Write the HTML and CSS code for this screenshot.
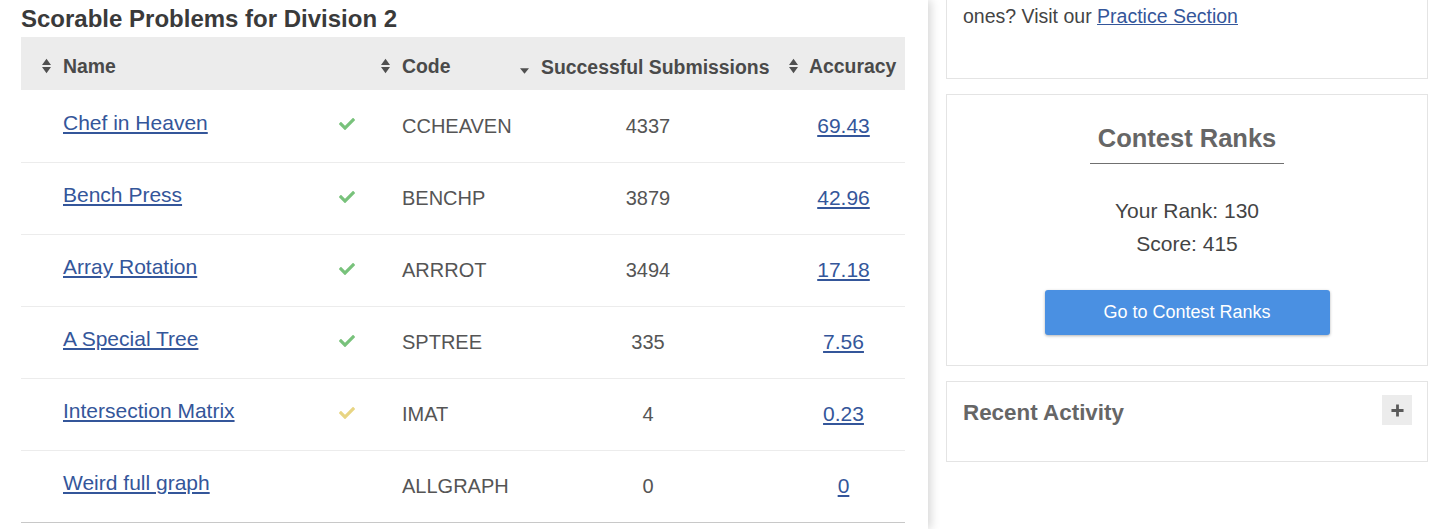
FILE: index.html
```html
<!DOCTYPE html>
<html>
<head>
<meta charset="utf-8">
<link rel="stylesheet" href="styles.css">
</head>
<body>
<div class="page">
  <main class="left">
    <h2 class="section-title">Scorable Problems for Division 2</h2>
    <table class="problems">
      <colgroup>
        <col class="c-name"><col class="c-check"><col class="c-code"><col class="c-succ"><col class="c-acc">
      </colgroup>
      <thead>
        <tr>
          <th class="th-name"><span class="th-inner"><svg class="sort" viewBox="0 0 10 17"><path d="M5 0.5L10 7.5H0Z M0 9.5H10L5 16.5Z"/></svg>Name</span></th>
          <th></th>
          <th class="th-code"><span class="th-inner"><svg class="sort" viewBox="0 0 10 17"><path d="M5 0.5L10 7.5H0Z M0 9.5H10L5 16.5Z"/></svg>Code</span></th>
          <th class="th-succ"><span class="th-inner"><svg class="sort-down" viewBox="0 0 10 6"><path d="M0 0H10L5 6Z"/></svg>Successful Submissions</span></th>
          <th class="th-acc"><span class="th-inner"><svg class="sort" viewBox="0 0 10 17"><path d="M5 0.5L10 7.5H0Z M0 9.5H10L5 16.5Z"/></svg>Accuracy</span></th>
        </tr>
      </thead>
      <tbody>
        <tr>
          <td class="td-name"><a href="#">Chef in Heaven</a></td>
          <td class="td-check"><svg class="check ok" viewBox="0 0 512 512"><path d="M173.9 439.4l-166.4-166.4c-10-10-10-26.2 0-36.2l36.2-36.2c10-10 26.2-10 36.2 0L192 312.7 432.1 72.6c10-10 26.2-10 36.2 0l36.2 36.2c10 10 10 26.2 0 36.2l-294.4 294.4c-10 10-26.2 10-36.2 0z"/></svg></td>
          <td class="td-code">CCHEAVEN</td>
          <td class="td-num">4337</td>
          <td class="td-acc"><a href="#">69.43</a></td>
        </tr>
        <tr>
          <td class="td-name"><a href="#">Bench Press</a></td>
          <td class="td-check"><svg class="check ok" viewBox="0 0 512 512"><path d="M173.9 439.4l-166.4-166.4c-10-10-10-26.2 0-36.2l36.2-36.2c10-10 26.2-10 36.2 0L192 312.7 432.1 72.6c10-10 26.2-10 36.2 0l36.2 36.2c10 10 10 26.2 0 36.2l-294.4 294.4c-10 10-26.2 10-36.2 0z"/></svg></td>
          <td class="td-code">BENCHP</td>
          <td class="td-num">3879</td>
          <td class="td-acc"><a href="#">42.96</a></td>
        </tr>
        <tr>
          <td class="td-name"><a href="#">Array Rotation</a></td>
          <td class="td-check"><svg class="check ok" viewBox="0 0 512 512"><path d="M173.9 439.4l-166.4-166.4c-10-10-10-26.2 0-36.2l36.2-36.2c10-10 26.2-10 36.2 0L192 312.7 432.1 72.6c10-10 26.2-10 36.2 0l36.2 36.2c10 10 10 26.2 0 36.2l-294.4 294.4c-10 10-26.2 10-36.2 0z"/></svg></td>
          <td class="td-code">ARRROT</td>
          <td class="td-num">3494</td>
          <td class="td-acc"><a href="#">17.18</a></td>
        </tr>
        <tr>
          <td class="td-name"><a href="#">A Special Tree</a></td>
          <td class="td-check"><svg class="check ok" viewBox="0 0 512 512"><path d="M173.9 439.4l-166.4-166.4c-10-10-10-26.2 0-36.2l36.2-36.2c10-10 26.2-10 36.2 0L192 312.7 432.1 72.6c10-10 26.2-10 36.2 0l36.2 36.2c10 10 10 26.2 0 36.2l-294.4 294.4c-10 10-26.2 10-36.2 0z"/></svg></td>
          <td class="td-code">SPTREE</td>
          <td class="td-num">335</td>
          <td class="td-acc"><a href="#">7.56</a></td>
        </tr>
        <tr>
          <td class="td-name"><a href="#">Intersection Matrix</a></td>
          <td class="td-check"><svg class="check partial" viewBox="0 0 512 512"><path d="M173.9 439.4l-166.4-166.4c-10-10-10-26.2 0-36.2l36.2-36.2c10-10 26.2-10 36.2 0L192 312.7 432.1 72.6c10-10 26.2-10 36.2 0l36.2 36.2c10 10 10 26.2 0 36.2l-294.4 294.4c-10 10-26.2 10-36.2 0z"/></svg></td>
          <td class="td-code">IMAT</td>
          <td class="td-num">4</td>
          <td class="td-acc"><a href="#">0.23</a></td>
        </tr>
        <tr class="last">
          <td class="td-name"><a href="#">Weird full graph</a></td>
          <td class="td-check"></td>
          <td class="td-code">ALLGRAPH</td>
          <td class="td-num">0</td>
          <td class="td-acc"><a href="#">0</a></td>
        </tr>
      </tbody>
    </table>
  </main>
  <aside class="right">
    <section class="card card-practice">
      <p class="practice-text">ones? Visit our <a href="#">Practice Section</a></p>
    </section>
    <section class="card card-ranks">
      <h3 class="ranks-title">Contest Ranks</h3>
      <div class="ranks-info">
        <div>Your Rank: 130</div>
        <div>Score: 415</div>
      </div>
      <button class="ranks-btn" type="button">Go to Contest Ranks</button>
    </section>
    <section class="card card-activity">
      <h3 class="activity-title">Recent Activity</h3>
      <span class="plus-btn">
        <svg viewBox="0 0 14 14"><path d="M5.5 0.5h3v5h5v3h-5v5h-3v-5h-5v-3h5z"/></svg>
      </span>
    </section>
  </aside>
</div>
</body>
</html>
```

FILE: styles.css
```css
* { box-sizing: border-box; }

html, body {
  margin: 0;
  padding: 0;
  background: #fff;
}

body {
  font-family: "Liberation Sans", Arial, sans-serif;
  color: #555;
  font-size: 20px;
}

a {
  color: #34569a;
  text-decoration: underline;
}

.page {
  display: flex;
  min-height: 100vh;
}

.left {
  width: 928px;
  flex: none;
  background: #fff;
  padding: 5px 23px 0 21px;
  box-shadow: 3px 0 9px rgba(0, 0, 0, 0.16);
  position: relative;
  z-index: 1;
}

.section-title {
  margin: 0 0 4px;
  font-size: 24px;
  line-height: 28px;
  font-weight: bold;
  color: #3a3a3a;
}

.problems {
  width: 884px;
  border-collapse: collapse;
  table-layout: fixed;
}

.c-name { width: 299px; }
.c-check { width: 54px; }
.c-code { width: 136px; }
.c-succ { width: 276px; }
.c-acc { width: 119px; }

.problems thead tr {
  height: 53px;
  background: #ececec;
}

.problems th {
  padding: 7px 0 0;
  text-align: left;
  font-size: 19.4px;
  font-weight: bold;
  color: #4a4a4a;
  white-space: nowrap;
  vertical-align: middle;
}

.th-inner {
  display: inline-flex;
  align-items: center;
}

.sort {
  width: 9px;
  height: 16px;
  fill: #505050;
  flex: none;
}

.sort-down {
  width: 9px;
  height: 6px;
  fill: #505050;
  flex: none;
  margin-top: 7px;
}

.th-name { padding-left: 21px !important; }
.th-name .sort { margin-right: 12px; }
.th-code { padding-left: 7px !important; }
.th-code .sort { margin-right: 12px; }
.th-succ { padding-left: 10px !important; }
.th-succ .sort-down { margin-right: 12px; }
.th-acc { padding-left: 3px !important; }
.th-acc .sort { margin-right: 11px; }

.problems tbody tr {
  height: 72px;
  border-bottom: 1px solid #ececec;
}

.problems tbody tr.last {
  border-bottom: 1px solid #c8c8c8;
}

.problems td {
  padding: 0;
  vertical-align: middle;
  font-size: 20px;
  line-height: 24px;
  color: #555;
}

.td-name {
  padding-left: 42px !important;
  padding-bottom: 6px !important;
  font-size: 21px !important;
}

.td-check {
  text-align: center;
  padding-bottom: 6px !important;
}

.check {
  width: 16px;
  height: 16px;
  display: inline-block;
  vertical-align: middle;
}

.check.ok { fill: #78c27b; }
.check.partial { fill: #e8d583; }

.td-code {
  padding-left: 28px !important;
}

.td-num {
  text-align: center;
}

.td-acc {
  text-align: center;
  padding-right: 4px !important;
  font-size: 21px !important;
}

.right {
  flex: 1;
  padding: 0 13px 0 18px;
  display: flex;
  flex-direction: column;
  gap: 15px;
}

.card {
  border: 1px solid #e4e4e4;
  background: #fff;
}

.card-practice {
  border-top: 0;
  height: 79px;
  padding: 4px 16px 0;
}

.practice-text {
  margin: 0;
  font-size: 19.5px;
  line-height: 24px;
  color: #444;
}

.card-ranks {
  height: 272px;
  padding-top: 28px;
  display: flex;
  flex-direction: column;
  align-items: center;
}

.ranks-title {
  margin: 0;
  padding: 0 8px 10px;
  font-size: 25.5px;
  line-height: 30px;
  font-weight: bold;
  color: #666;
  border-bottom: 1px solid #707070;
}

.ranks-info {
  margin-top: 30px;
  text-align: center;
  font-size: 21px;
  line-height: 33px;
  color: #444;
}

.ranks-btn {
  margin-top: 30px;
  width: 285px;
  height: 45px;
  border: 0;
  border-radius: 3px;
  background: #4a90e2;
  color: #fff;
  font-family: "Liberation Sans", Arial, sans-serif;
  font-size: 18px;
  box-shadow: 0 1px 3px rgba(0, 0, 0, 0.3);
}

.card-activity {
  height: 81px;
  padding: 13px 15px 0 16px;
  display: flex;
  justify-content: space-between;
  align-items: flex-start;
}

.activity-title {
  margin: 0;
  font-size: 22.4px;
  line-height: 30px;
  font-weight: bold;
  color: #666;
  padding-top: 3px;
}

.plus-btn {
  width: 30px;
  height: 30px;
  background: #ececec;
  display: flex;
  align-items: center;
  justify-content: center;
}

.plus-btn svg {
  width: 13px;
  height: 13px;
  fill: #5a5a5a;
}
```
